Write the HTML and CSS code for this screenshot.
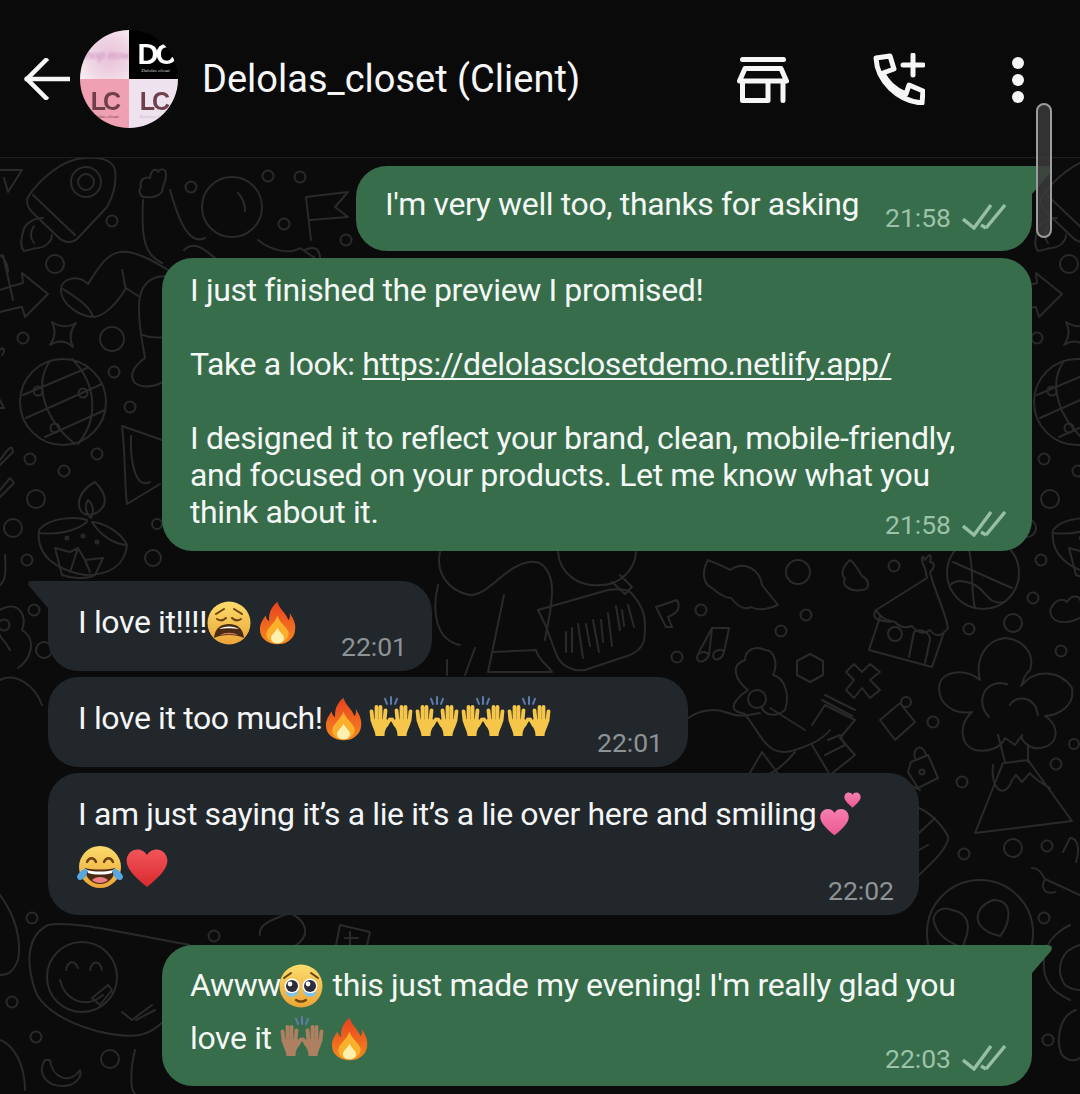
FILE: index.html
```html
<!DOCTYPE html>
<html lang="en">
<head>
<meta charset="utf-8">
<title>Delolas_closet (Client)</title>
<link rel="stylesheet" href="styles.css">
</head>
<body>
<svg class="defs" aria-hidden="true">
  <defs>
    <linearGradient id="gFace" x1="0" y1="0" x2="0" y2="1"><stop offset="0" stop-color="#fbdc6c"/><stop offset="1" stop-color="#eca437"/></linearGradient>
    <linearGradient id="gFire" x1="0" y1="0" x2="0" y2="1"><stop offset="0" stop-color="#e8401c"/><stop offset="1" stop-color="#f68a22"/></linearGradient>
    <linearGradient id="gPink" x1="0" y1="0" x2="0" y2="1"><stop offset="0" stop-color="#f77eb0"/><stop offset="1" stop-color="#ea5a92"/></linearGradient>
    <linearGradient id="gRed" x1="0" y1="0" x2="0" y2="1"><stop offset="0" stop-color="#f2555a"/><stop offset="1" stop-color="#d9292f"/></linearGradient>
    <symbol id="heart" viewBox="0 0 24 22"><path d="M12 21.500C5 15.500 .8 11.500 .8 7 .8 3.300 3.600 .8 6.800 .8 9 .8 11 2 12 4 13 2 15 .8 17.200 .8 20.400 .8 23.200 3.300 23.200 7 23.200 11.500 19 15.500 12 21.500Z"/></symbol>
    <symbol id="fire" viewBox="0 0 40 46">
      <path fill="url(#gFire)" d="M20 0C22 8 29 12 32 20 33.500 18 34 15 33 12 38 19 40 25 39 31 38 40 30 46 20 46 10 46 1 40 1 30 1 24 4 20 7 15 8 18 9 20 11 21 10 12 14 5 20 0Z"/>
      <path fill="#fbb02c" d="M20 15C22 23 30 27 32 33 33 40 26 45 20 45 13 45 7 40 8 34 9 28 17 24 20 15Z"/>
      <path fill="#fff0b0" d="M20 28C22 33 27 35 27 39 27 43 24 45 20 45 16 45 13 43 13 39 13 35 18 33 20 28Z"/>
    </symbol>
    <symbol id="hands" viewBox="0 0 46 46" preserveAspectRatio="none">
      <g id="oneHand">
        <path fill="currentColor" d="M3 26H19L21 32C18 36 16.500 39 16.500 45H7.500C7.500 38 3 34 3 26Z"/>
        <path fill="none" stroke="currentColor" stroke-width="3.800" stroke-linecap="round" d="M4.500 28 3.500 17M8.500 27V12M12.500 27V12M16.500 28 17.500 16M18 33 22 26"/>
      </g>
      <use href="#oneHand" transform="translate(46) scale(-1 1)"/>
      <path fill="none" stroke="#5f7cae" stroke-width="2" stroke-linecap="round" d="M23 1V9M17 3 19 9M29 3 27 9"/>
    </symbol>
    <symbol id="weary" viewBox="0 0 44 44">
      <circle cx="22" cy="22" r="21.500" fill="url(#gFace)"/>
      <path fill="none" stroke="#6b4210" stroke-width="2" stroke-linecap="round" d="M9 13 17 8M35 13 27 8M10 18C13 20 16 20 19 17M34 18C31 20 28 20 25 17"/>
      <path fill="#4a2a12" d="M7 37C8 26 15 23 22 23 29 23 36 26 37 37 30 33 14 33 7 37Z"/>
      <path fill="#fff" d="M12 28C17 24.500 27 24.500 32 28 26 27 18 27 12 28Z"/>
      <path fill="#d97a66" d="M13 34C18 31 26 31 31 34 26 33 18 33 13 34Z"/>
    </symbol>
    <symbol id="joy" viewBox="0 0 46 44">
      <circle cx="23" cy="22" r="21" fill="url(#gFace)"/>
      <path fill="none" stroke="#6b4210" stroke-width="2.400" stroke-linecap="round" d="M10 17C12 12 17 12 19 17M27 17C29 12 34 12 36 17"/>
      <path fill="#4a2a12" d="M8 23C16 25 30 25 38 23 38 33 31 39 23 39 15 39 8 33 8 23Z"/>
      <path fill="#fff" d="M10 25C18 27 28 27 36 25L35 28C28 30 18 30 11 28Z"/>
      <path fill="#ed7f82" d="M15 35C19 31 27 31 31 35 27 39 19 39 15 35Z"/>
      <path fill="#57a8e0" d="M0 31C3 26 7 23 10 24 11 28 9 34 3 35 1 35 0 33 0 31ZM46 31C43 26 39 23 36 24 35 28 37 34 43 35 45 35 46 33 46 31Z"/>
    </symbol>
    <symbol id="pleading" viewBox="0 0 44 44">
      <circle cx="22" cy="22" r="21.500" fill="url(#gFace)"/>
      <path fill="none" stroke="#6b4210" stroke-width="2" stroke-linecap="round" d="M5 14 12 9M39 14 32 9"/>
      <circle cx="13" cy="22" r="7.500" fill="#fff"/><circle cx="31" cy="22" r="7.500" fill="#fff"/>
      <circle cx="13" cy="22" r="6" fill="#2c2c3a"/><circle cx="31" cy="22" r="6" fill="#2c2c3a"/>
      <circle cx="11" cy="20" r="2.400" fill="#fff"/><circle cx="29" cy="20" r="2.400" fill="#fff"/>
      <path fill="#7fc4ea" d="M6 27C9 30 17 30 20 26 20 30 16 33 12 33 9 33 7 30 6 27ZM38 27C35 30 27 30 24 26 24 30 28 33 32 33 35 33 37 30 38 27Z"/>
      <path fill="none" stroke="#6b4210" stroke-width="2.200" stroke-linecap="round" d="M17 36C20 38 24 38 27 36"/>
    </symbol>
    <symbol id="check" viewBox="0 0 44 26">
      <path fill="none" stroke="currentColor" stroke-width="3.400" d="M1 15 12 24 29 1M24 24 43 1M19 21 24 24"/>
    </symbol>
  </defs>
</svg>

<div class="phone">
  <header class="topbar">
    <svg class="back" viewBox="0 0 46 42"><path d="M44 21H3M22 2 3 21 22 40"/></svg>
    <div class="avatar">
      <div class="tile tile-script"><span class="script">Shop now</span></div>
      <div class="tile tile-black"><span class="mono mono-big">DC</span><span class="tag tag-light">Delolas closet</span></div>
      <div class="tile tile-rose"><span class="mono mono-dark">LC</span><span class="tag tag-dark">Delolas closet</span></div>
      <div class="tile tile-pale"><span class="mono mono-dark">LC</span><span class="tag tag-faint">Delolas closet</span></div>
    </div>
    <h1 class="title">Delolas_closet (Client)</h1>
    <div class="actions">
      <svg class="store" viewBox="0 0 52 46">
        <rect x="3" width="46" height="5" rx="2.500" class="solid"/>
        <path class="line" d="M8 11.500H44L49.500 24H2.500ZM5.500 24V43.500H31V24M46 24V43.500"/>
      </svg>
      <svg class="call" viewBox="0 0 52 52">
        <path class="line" d="M3 5 17 3 21 16 10 20C13 28 22 37 33 41L36 32 50 38 49 50C25 48 4 28 3 5Z"/>
        <path class="line" d="M30 12H50M40 2V22"/>
      </svg>
      <svg class="dots" viewBox="0 0 12 46"><circle cx="6" cy="6" r="6"/><circle cx="6" cy="23" r="6"/><circle cx="6" cy="40" r="6"/></svg>
    </div>
  </header>

  <main class="chat">
    <svg class="wallpaper" viewBox="0 158 1080 936" preserveAspectRatio="none" aria-hidden="true">
      <g class="dd">
        <g id="tileLeft">
          <circle cx="112" cy="221" r="5.500"/><circle cx="55" cy="264" r="9"/><circle cx="23" cy="338" r="5.500"/><circle cx="112" cy="339" r="12"/><circle cx="114" cy="372" r="5.500"/><circle cx="130" cy="407" r="5.500"/><circle cx="30" cy="459" r="5.500"/><circle cx="97" cy="454" r="5.500"/><circle cx="64" cy="471" r="5.500"/><circle cx="36" cy="499" r="9"/><circle cx="13" cy="528" r="9"/><circle cx="27" cy="560" r="5.500"/>
          <path d="M28 197C40 178 62 162 77 159 95 156 112 158 115 170 117 185 112 198 107 207L78 238C72 244 64 243 58 237L32 212C27 207 26 201 28 197ZM33 195 75 235"/>
          <circle cx="86" cy="182" r="15"/><circle cx="86" cy="182" r="8"/>
          <path d="M43 218C32 218 24 225 23 232 21 240 20 246 24 251 30 250 34 248 38 248 46 247 52 241 52 235M34 226C30 232 30 238 34 243"/>
          <path d="M0 170 22 170 8 192 4 178"/>
          <path d="M0 290C8 287 15 285 23 283L22 273 48 294 25 317 22 307C15 308 8 310 0 312"/>
          <path d="M52 322Q64 330 76 323 67 334 73 347 62 337 50 345 58 334 52 322Z"/>
          <circle cx="63" cy="402" r="43"/>
          <path d="M23 395 87 368M26 418 102 384M45 437 105 410M50 361C33 385 45 420 75 444M72 359C98 385 98 420 78 444"/>
          <circle cx="38" cy="391" r="4.500"/><circle cx="83" cy="393" r="4.500"/><circle cx="55" cy="428" r="4.500"/>
          <path d="M95 482C80 490 76 503 81 511 85 517 98 516 104 505 107 496 101 488 95 482ZM88 500C84 506 86 514 91 518 94 513 94 505 88 500Z"/>
          <path d="M39 530C50 516 78 517 87 520M39 530C36 555 55 570 85 575 110 575 125 565 127 545 120 530 100 522 92 522M39 533C55 535 75 532 87 522M92 522C100 535 115 545 127 545"/>
          <path d="M55 548 70 552 78 548 85 560 103 558 95 575C85 580 70 578 62 575ZM78 548 70 572M85 560 90 572"/>
          <circle cx="67" cy="538" r="1.500"/><circle cx="83" cy="536" r="1.500"/><circle cx="97" cy="542" r="1.500"/>
        </g>
        <use href="#tileLeft" x="1014"/>
        <circle cx="153" cy="558" r="8"/><circle cx="157" cy="524" r="5"/>
        <circle cx="268" cy="176" r="5.500"/><circle cx="300" cy="177" r="5.500"/><circle cx="191" cy="187" r="5.500"/><circle cx="284" cy="224" r="5.500"/><circle cx="346" cy="240" r="5.500"/>
        <circle cx="798" cy="572" r="12"/><circle cx="894" cy="566" r="5.500"/><circle cx="701" cy="610" r="5.500"/><circle cx="806" cy="615" r="5.500"/><circle cx="781" cy="631" r="5.500"/><circle cx="677" cy="657" r="5.500"/><circle cx="969" cy="629" r="5.500"/><circle cx="1013" cy="623" r="9"/><circle cx="1033" cy="598" r="5.500"/><circle cx="1061" cy="651" r="5.500"/><circle cx="933" cy="722" r="5.500"/><circle cx="1056" cy="764" r="5.500"/><circle cx="1074" cy="744" r="5"/><circle cx="962" cy="782" r="5.500"/><circle cx="964" cy="854" r="5.500"/><circle cx="1013" cy="848" r="9"/><circle cx="1047" cy="846" r="5.500"/><circle cx="1044" cy="918" r="5.500"/>
        <circle cx="32" cy="918" r="5.500"/><circle cx="214" cy="936" r="5.500"/><circle cx="12" cy="1002" r="5.500"/><circle cx="36" cy="1037" r="5.500"/><circle cx="110" cy="1059" r="9"/><circle cx="34" cy="610" r="5.500"/><circle cx="44" cy="650" r="8"/><circle cx="4" cy="625" r="5.500"/>
        <path d="M0 255C4 258 8 262 8 272M3 255 13 300"/>
        <path d="M88 284C78 274 60 278 61 291 62 306 82 317 94 317 105 316 118 302 126 288M63 289C72 295 90 305 93 317M88 284C96 272 105 254 120 252 135 250 155 262 168 270M122 270C124 276 124 285 126 288L138 296"/>
        <path d="M168 276C150 275 138 285 139 310 139 330 143 345 145 358 135 365 128 375 135 383 145 390 160 385 165 380M143 335C150 338 158 338 165 337"/>
        <path d="M143 200C141 240 145 255 162 263M145 197C140 198 138 190 141 187 139 180 145 176 150 178 151 170 156 167 158 172 161 168 166 168 166 175 166 182 162 187 162 192 158 197 150 198 145 197Z"/>
        <circle cx="232" cy="207" r="30"/>
        <path d="M238 193C243 198 245 204 245 211M170 190C180 225 190 245 205 238M184 250C195 240 205 250 215 258M258 240C270 250 290 255 300 248L315 258"/>
        <path d="M306 197 348 192 335 207 348 217 310 220M306 197 311 240M305 250C315 245 320 250 320 258"/>
        <path d="M0 350C3 346 6 350 2 355M0 400 4 408 0 408M0 460C6 452 10 446 12 448L13 452 0 465M0 490 10 478 14 483 0 497"/>
        <path d="M122 426 162 440M122 426C126 460 124 480 127 504L160 484M131 436C130 460 135 490 150 482"/>
        <path d="M5 555C6 570 6 580 0 585M0 610C18 600 28 615 22 630 38 640 30 660 18 668M10 650C5 640 0 638 0 635M0 680C15 672 35 685 42 705"/>
        <path d="M558 552C560 575 580 587 600 585 620 585 635 570 636 552M612 582 625 594 632 587 620 575"/>
        <path d="M440 552C436 570 445 590 470 595 490 595 505 565 530 562 545 560 552 575 552 590 552 610 548 620 545 640M438 585C432 610 435 640 460 645M504 595 488 672M492 652 536 650C538 660 548 665 552 672L488 672M447 660 447 675M475 648 465 675"/>
        <path d="M538 610 608 590C622 588 630 590 633 595 642 605 645 615 645 625 645 640 645 648 630 655L585 670C572 672 562 665 558 658 552 645 548 630 544 622Z"/>
        <path d="M566 632V652M572 628V652M578 624 583 658M586 624 590 646M593 620 599 652M601 620 603 642M608 613 612 646M616 606 620 630M622 610 624 626M628 605 634 627"/>
        <path d="M656 607 677 600C680 606 680 612 668 617L672 627 666 627ZM708 560C700 575 705 585 712 588 720 595 726 598 731 598 738 607 745 610 751 607 760 612 770 608 778 605L762 585C760 570 745 560 730 570 722 565 712 562 708 560Z"/>
        <path d="M699 652 712 628 729 628 724 652M712 628 709 655M709 655C706 662 698 664 697 658 697 652 705 650 709 655ZM724 652C722 660 714 662 713 656 713 650 722 648 724 652Z"/>
        <path d="M850 560C843 566 840 575 845 578 840 585 850 592 862 590 870 590 870 580 862 576 858 570 855 563 850 560ZM925 568 927 578 876 610C870 620 880 620 890 622M925 568C920 560 922 552 925 560 930 552 932 555 930 562 935 562 935 568 930 572 932 585 945 610 948 628"/>
        <path d="M880 617 869 650 932 667 944 632M876 610C882 620 888 620 895 622 900 628 906 628 912 626 918 634 925 634 930 630 936 638 942 636 948 628"/>
        <circle cx="895" cy="634" r="7"/>
        <path d="M909 657 914 632C920 628 930 632 930 640L925 663"/>
        <circle cx="983" cy="573" r="36"/>
        <path d="M953 562 1012 588M967 542C975 565 970 590 975 608M950 585C958 578 968 582 975 585 985 590 990 606 1003 602"/>
        <path d="M1063 622C1052 622 1047 612 1053 605 1056 600 1063 598 1067 602 1072 594 1080 596 1080 600M1065 622C1070 622 1076 620 1080 618"/>
        <path d="M980 680C975 660 985 640 1005 638 1025 640 1035 655 1030 670 1020 680 1025 680 1021 686 1035 668 1060 670 1072 688 1075 705 1060 715 1045 716 1060 725 1060 745 1040 748 1030 750 1020 740 1022 735L1015 745 1005 738C1000 750 985 752 975 750 960 745 958 725 972 712 955 715 939 705 939 688 940 670 965 668 980 680Z"/>
        <path d="M989 717C978 705 980 685 1000 683 1005 683 1010 685 1005 684M1010 705C1015 695 1035 695 1038 715"/>
        <path d="M998 735 1005 762M1028 745V762M1005 763 1028 760 1072 821 975 833 1003 763M993 765C990 790 1005 800 1012 780L1016 775 1022 782 1030 773C1035 780 1045 785 1050 788"/>
        <circle cx="757" cy="699" r="9"/>
        <path d="M748 690C735 680 730 665 745 660 745 650 755 645 765 650 775 650 778 665 773 675 785 678 790 695 785 710 775 718 765 715 762 708M748 690C740 695 730 705 735 710 740 715 745 712 745 715"/>
        <path d="M688 718C700 710 715 708 725 712 740 718 750 715 760 713M770 708 805 730M745 715C760 730 765 760 795 750 810 745 822 740 830 730M812 725 825 705 855 720 840 738 855 755 830 775 812 745"/>
        <path d="M825 695 855 710M822 700 852 716M828 740 840 735 845 745 825 755M795 752C780 770 770 775 750 782M762 752 740 790M762 752 790 790"/>
        <path d="M810 654 823 661V675L810 682 797 675V661Z"/>
        <path d="M854 664 862 672 870 664 880 672 870 680 880 690 870 698 862 688 854 698 846 690 854 680 846 672Z"/>
        <path d="M880 720 900 703 915 722 895 740Z"/>
        <circle cx="906" cy="702" r="5"/>
        <path d="M911 762 928 755 938 778 918 788 908 772ZM915 758C912 748 922 742 926 755"/>
        <circle cx="922" cy="772" r="2.500"/>
        <path d="M919 808C935 815 950 835 948 840 945 850 935 860 919 875M919 833 935 818M928 845 919 850M880 790 900 780 920 790"/>
        <path d="M1032 868C1040 868 1042 875 1045 879L1080 895M1045 879C1040 888 1045 895 1055 892M1063 852 1070 838C1078 838 1080 850 1076 862"/>
        <path d="M0 895C15 915 22 940 18 960 12 975 5 975 0 975M48 925C75 920 130 935 190 945M48 925C28 935 25 960 35 990 45 1020 110 1040 140 1035 150 1033 160 1025 165 1020"/>
        <circle cx="82" cy="977" r="35"/>
        <path d="M60 980C65 1000 85 1010 103 995M66 970C68 960 75 960 78 968M90 970C92 960 100 960 102 970M92 998 108 985 112 990 100 1005Z"/>
        <path d="M122 1012 132 1020 152 1005M136 1020 155 1010"/>
        <path d="M45 1060C35 1075 50 1090 70 1085 78 1082 82 1075 80 1070 70 1085 52 1078 50 1060Z"/>
        <path d="M0 1040C14 1045 25 1065 25 1090M135 1050C130 1070 130 1090 135 1094"/>
        <path d="M260 935C258 925 270 920 290 913 305 920 310 932 300 942L280 958M340 925 370 932 365 955 335 950ZM350 932V945M345 938H358"/>
        <circle cx="980" cy="933" r="53"/>
        <path d="M952 910C940 905 930 915 935 925 940 938 950 942 962 948 968 935 975 915 952 910ZM993 900C980 905 974 915 980 925 985 932 995 935 1000 936 1010 925 1015 900 993 900Z"/>
        <path d="M1010 960C1015 970 1010 980 1005 985M1070 925C1050 935 1040 950 1045 975 1050 990 1060 995 1070 1000M1080 945C1060 950 1055 970 1065 985 1072 990 1080 990 1080 990"/>
        <path d="M1076 1010C1060 1015 1055 1040 1062 1055 1070 1063 1078 1060 1080 1058"/>
        <circle cx="1048" cy="1040" r="5.500"/>
      </g>
    </svg>

    <div class="bubble out first b1">
      <div class="msg">I'm very well too, thanks for asking</div>
      <div class="meta"><span>21:58</span><svg class="tick"><use href="#check"/></svg></div>
    </div>
    <div class="bubble out b2">
      <div class="msg">I just finished the preview I promised!<br><br>Take a look: <a class="link">https://delolasclosetdemo.netlify.app/</a><br><br>I designed it to reflect your brand, clean, mobile-friendly,<br>and focused on your products. Let me know what you<br>think about it.</div>
      <div class="meta"><span>21:58</span><svg class="tick"><use href="#check"/></svg></div>
    </div>
    <div class="bubble in first b3">
      <div class="msg">I love it!!!!<svg class="emoji e-weary"><use href="#weary"/></svg><svg class="emoji e-fire"><use href="#fire"/></svg></div>
      <div class="meta"><span>22:01</span></div>
    </div>
    <div class="bubble in b4">
      <div class="msg">I love it too much!<svg class="emoji e-fire"><use href="#fire"/></svg><svg class="emoji e-hands"><use href="#hands"/></svg><svg class="emoji e-hands"><use href="#hands"/></svg><svg class="emoji e-hands"><use href="#hands"/></svg><svg class="emoji e-hands"><use href="#hands"/></svg></div>
      <div class="meta"><span>22:01</span></div>
    </div>
    <div class="bubble in b5">
      <div class="msg">I am just saying it’s a lie it’s a lie over here and smiling<span class="two-hearts"><svg class="big"><use href="#heart"/></svg><svg class="small"><use href="#heart"/></svg></span></div>
      <div class="emoji-line"><svg class="emoji e-joy"><use href="#joy"/></svg><svg class="emoji e-red"><use href="#heart"/></svg></div>
      <div class="meta"><span>22:02</span></div>
    </div>
    <div class="bubble out first b6">
      <div class="msg loose">Awww<svg class="emoji e-plead"><use href="#pleading"/></svg> this just made my evening! I'm really glad you<br>love it <svg class="emoji e-hands brown"><use href="#hands"/></svg> <svg class="emoji e-fire"><use href="#fire"/></svg></div>
      <div class="meta"><span>22:03</span><svg class="tick"><use href="#check"/></svg></div>
    </div>
  </main>

  <div class="scrollbar"></div>
</div>
</body>
</html>
```

FILE: styles.css
```css
* { box-sizing: border-box; }
html, body { margin: 0; padding: 0; }
body { background: #0b0b0b; font-family: Roboto, "Liberation Sans", sans-serif; color: #f4f6f5; }
.defs { position: absolute; width: 0; height: 0; overflow: hidden; }

.phone { position: relative; width: 1080px; height: 1094px; overflow: hidden; display: flex; flex-direction: column; background: #0b0b0b; }

.topbar { flex: none; height: 158px; display: flex; align-items: center; padding: 0 56px 0 24px; background: #0a0a0a; border-bottom: 1px solid #1e1e1e; }
.back { width: 46px; height: 42px; flex: none; margin-right: 10px; }
.back path { fill: none; stroke: #f6f6f6; stroke-width: 4.500; stroke-linecap: square; }
.avatar { width: 98px; height: 98px; flex: none; border-radius: 50%; overflow: hidden; display: grid; grid-template-columns: 1fr 1fr; grid-template-rows: 1fr 1fr; margin-top: 1px; }
.tile { display: flex; flex-direction: column; align-items: center; justify-content: center; overflow: hidden; }
.tile-script { background: radial-gradient(circle at 60% 55%, #e8bfd8 0%, #f0d9e5 55%, #fbf6f8 100%); }
.tile-black { background: #000; padding: 6px 0 0 4px; }
.tile-rose { background: #efa0b2; padding-top: 2px; }
.tile-pale { background: #efe2ef; padding-top: 2px; }
.script { font: italic 13px "Liberation Serif", serif; color: #c98bc0; filter: blur(.8px); white-space: nowrap; }
.mono { font-family: "Liberation Sans", sans-serif; font-weight: 700; font-size: 25px; line-height: 25px; letter-spacing: -3px; }
.mono-big { color: #fff; font-size: 29px; line-height: 27px; filter: blur(.3px); }
.mono-dark { color: #6f3f4c; filter: blur(.4px); }
.tag { font: italic 5px/6px "Liberation Serif", serif; white-space: nowrap; }
.tag-light { color: #ddd; }
.tag-dark { color: #6d3e4a; }
.tag-faint { color: #c9b3c9; }

.title { margin: 0 0 0 24px; flex: 1; font-family: Roboto, sans-serif; font-weight: 400; font-size: 38px; line-height: 44px; color: #f6f6f6; white-space: nowrap; }
.actions { flex: none; display: flex; align-items: center; gap: 84px; }
.actions .line { fill: none; stroke: #f6f6f6; stroke-width: 5; stroke-linejoin: round; stroke-linecap: round; }
.actions .solid { fill: #f6f6f6; }
.store { width: 52px; height: 46px; margin-top: 2px; }
.call { width: 52px; height: 52px; }
.dots { width: 12px; height: 46px; margin-left: 3px; fill: #f6f6f6; margin-top: 2px; }

.chat { position: relative; flex: 1; min-height: 0; display: flex; flex-direction: column; padding: 8px 48px 0; }
.wallpaper { position: absolute; left: 0; top: 0; width: 1080px; height: 936px; }
.dd { fill: none; stroke: #292a2a; stroke-width: 2; stroke-linejoin: round; stroke-linecap: round; }

.bubble { position: relative; flex: none; display: flex; flex-direction: column; border-radius: 31px; font-size: 32px; line-height: 37px; letter-spacing: -.37px; }
.bubble.out { align-self: flex-end; background: #376d4b; padding: 14px 26px 11px 28px; color: #f4f8f5; }
.bubble.in { align-self: flex-start; background: #22272b; padding: 23px 25px 9px 30px; color: #f4f5f6; }
.bubble.first::after { content: ""; position: absolute; top: 0; width: 22px; height: 28px; background: inherit; }
.bubble.out.first { border-top-right-radius: 0; }
.bubble.out.first::after { left: 100%; clip-path: path("M0 0H15Q22 0 19 6L0 28Z"); }
.bubble.in.first { border-top-left-radius: 0; }
.bubble.in.first::after { right: 100%; width: 20px; clip-path: path("M20 0H5Q-2 0 1 5L20 27Z"); }

.bubble.b1 { width: 676px; height: 85px; margin-bottom: 7px; padding: 20px 26px 18px 29px; }
.bubble.b2 { width: 870px; height: 293px; margin-bottom: 30px; }
.bubble.b3 { width: 384px; height: 90px; margin-bottom: 6px; }
.bubble.b4 { width: 640px; height: 90px; margin-bottom: 6px; }
.bubble.b5 { width: 871px; height: 142px; margin-bottom: 30px; }
.bubble.b6 { width: 870px; height: 141px; padding-top: 22px; padding-bottom: 12px; }

.msg { flex: none; margin-bottom: -37px; white-space: nowrap; }
.msg.loose { line-height: 53px; margin-top: -8px; }
.link { color: #f4f8f5; text-decoration: underline; text-underline-offset: 3px; text-decoration-thickness: 2px; }

.meta { margin-top: auto; align-self: flex-end; display: flex; align-items: center; gap: 11px; height: 30px; font-size: 26.500px; line-height: 30px; letter-spacing: 0; }
.out .meta { color: #9cc2aa; }
.in .meta { color: #8e9396; }
.tick { width: 44px; height: 26px; color: #97bfa6; margin-top: -3px; }

.emoji { margin-top: -12px; margin-bottom: -12px; }
.e-weary { width: 44px; height: 44px; margin-right: 6px; }
.e-fire { width: 37px; height: 44px; margin-left: 2px; }
.b4 .e-fire { margin-right: 6px; }
.b6 .e-fire { margin-left: -2px; }
.e-hands { width: 46px; height: 41px; color: #f6c64a; margin-bottom: -8px; }
.e-hands.brown { color: #ad8062; }
.e-plead { width: 44px; height: 44px; margin-left: -2px; margin-right: 2px; }
.two-hearts { display: inline-block; position: relative; width: 44px; height: 0; }
.two-hearts svg { position: absolute; fill: url(#gPink); }
.two-hearts .big { left: 2px; top: -17px; width: 33px; height: 28px; }
.two-hearts .small { left: 27px; top: -33px; width: 19px; height: 16px; }
.emoji-line { height: 45px; margin: 49px 0 -45px -1px; display: flex; gap: 2px; }
.emoji-line .emoji { margin-top: 0; margin-bottom: 0; }
.e-joy { width: 46px; height: 44px; }
.emoji-line .e-red { width: 44px; height: 40px; margin-top: 3px; fill: url(#gRed); }

.scrollbar { position: absolute; left: 1036px; top: 103px; width: 16px; height: 135px; border-radius: 8px; background: rgba(60, 60, 60, .82); border: 2.500px solid #9c9c9c; }
```
